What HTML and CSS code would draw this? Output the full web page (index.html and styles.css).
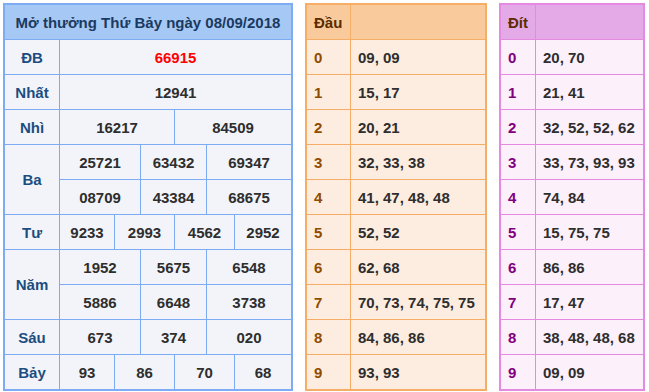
FILE: index.html
```html
<!DOCTYPE html>
<html lang="vi">
<head>
<meta charset="utf-8">
<title>Kết quả xổ số</title>
<link rel="stylesheet" href="styles.css">
</head>
<body>
<div class="wrap">
  <div class="kq">
    <div class="cell title s7">Mở thưởng Thứ Bảy ngày 08/09/2018</div>

    <div class="cell lbl">ĐB</div>
    <div class="cell num s6 red">66915</div>

    <div class="cell lbl">Nhất</div>
    <div class="cell num s6">12941</div>

    <div class="cell lbl">Nhì</div>
    <div class="cell num s3">16217</div>
    <div class="cell num s3">84509</div>

    <div class="cell lbl r2">Ba</div>
    <div class="cell num s2">25721</div>
    <div class="cell num s2">63432</div>
    <div class="cell num s2">69347</div>
    <div class="cell num s2">08709</div>
    <div class="cell num s2">43384</div>
    <div class="cell num s2">68675</div>

    <div class="cell lbl">Tư</div>
    <div class="cell num">9233</div>
    <div class="cell num s2">2993</div>
    <div class="cell num s2">4562</div>
    <div class="cell num">2952</div>

    <div class="cell lbl r2">Năm</div>
    <div class="cell num s2">1952</div>
    <div class="cell num s2">5675</div>
    <div class="cell num s2">6548</div>
    <div class="cell num s2">5886</div>
    <div class="cell num s2">6648</div>
    <div class="cell num s2">3738</div>

    <div class="cell lbl">Sáu</div>
    <div class="cell num s2">673</div>
    <div class="cell num s2">374</div>
    <div class="cell num s2">020</div>

    <div class="cell lbl">Bảy</div>
    <div class="cell num">93</div>
    <div class="cell num s2">86</div>
    <div class="cell num s2">70</div>
    <div class="cell num">68</div>
  </div>

  <div class="lt dau">
    <div class="cell head">Đầu</div><div class="cell head"></div>
    <div class="cell key">0</div><div class="cell val">09, 09</div>
    <div class="cell key">1</div><div class="cell val">15, 17</div>
    <div class="cell key">2</div><div class="cell val">20, 21</div>
    <div class="cell key">3</div><div class="cell val">32, 33, 38</div>
    <div class="cell key">4</div><div class="cell val">41, 47, 48, 48</div>
    <div class="cell key">5</div><div class="cell val">52, 52</div>
    <div class="cell key">6</div><div class="cell val">62, 68</div>
    <div class="cell key">7</div><div class="cell val">70, 73, 74, 75, 75</div>
    <div class="cell key">8</div><div class="cell val">84, 86, 86</div>
    <div class="cell key">9</div><div class="cell val">93, 93</div>
  </div>

  <div class="lt dit">
    <div class="cell head">Đít</div><div class="cell head"></div>
    <div class="cell key">0</div><div class="cell val">20, 70</div>
    <div class="cell key">1</div><div class="cell val">21, 41</div>
    <div class="cell key">2</div><div class="cell val">32, 52, 52, 62</div>
    <div class="cell key">3</div><div class="cell val">33, 73, 93, 93</div>
    <div class="cell key">4</div><div class="cell val">74, 84</div>
    <div class="cell key">5</div><div class="cell val">15, 75, 75</div>
    <div class="cell key">6</div><div class="cell val">86, 86</div>
    <div class="cell key">7</div><div class="cell val">17, 47</div>
    <div class="cell key">8</div><div class="cell val">38, 48, 48, 68</div>
    <div class="cell key">9</div><div class="cell val">09, 09</div>
  </div>
</div>
</body>
</html>
```

FILE: styles.css
```css
html, body {
  margin: 0;
  padding: 0;
  background: #ffffff;
}

body {
  font-family: "Liberation Sans", Arial, sans-serif;
  font-weight: bold;
  font-size: 15px;
  color: #2e2e2e;
}

.wrap {
  display: flex;
  align-items: flex-start;
  gap: 12px;
  padding: 3px 0 0 3px;
}

.cell {
  display: flex;
  align-items: center;
  white-space: nowrap;
  overflow: hidden;
}

/* Main results table */
.kq {
  display: grid;
  grid-template-columns: 54px 54px 25px 33px 31px 27px 56px;
  grid-auto-rows: 34px;
  gap: 1px;
  background: #7eacf4;
  border: 2px solid #7eacf4;
}

.kq .cell {
  justify-content: center;
  background: #f3f4f9;
}

.kq .title {
  background: #a6c8f4;
  color: #1b3a60;
}

.kq .lbl {
  color: #1b4d80;
}

.kq .num {
  color: #2e2e2e;
}

.kq .red {
  color: #ff0000;
}

.s7 { grid-column: span 7; }
.s6 { grid-column: span 6; }
.s3 { grid-column: span 3; }
.s2 { grid-column: span 2; }
.r2 { grid-row: span 2; }

/* Loto head/tail tables */
.lt {
  display: grid;
  grid-auto-rows: 34px;
  gap: 1px;
}

.lt .cell {
  padding-left: 7px;
}

.lt .val {
  color: #2e2e2e;
}

.dau {
  grid-template-columns: 43px 134px;
  background: #f6ad66;
  border: 2px solid #f6ad66;
}

.dau .cell {
  background: #fdede0;
}

.dau .head {
  background: #f9cb9c;
  color: #5a2c00;
}

.dau .key {
  color: #8f4c00;
}

.dit {
  grid-template-columns: 34px 107px;
  background: #e48ae0;
  border: 2px solid #e48ae0;
}

.dit .cell {
  background: #fcf0fa;
}

.dit .head {
  background: #e4aae8;
  color: #5a2c00;
}

.dit .key {
  color: #800080;
}
```
